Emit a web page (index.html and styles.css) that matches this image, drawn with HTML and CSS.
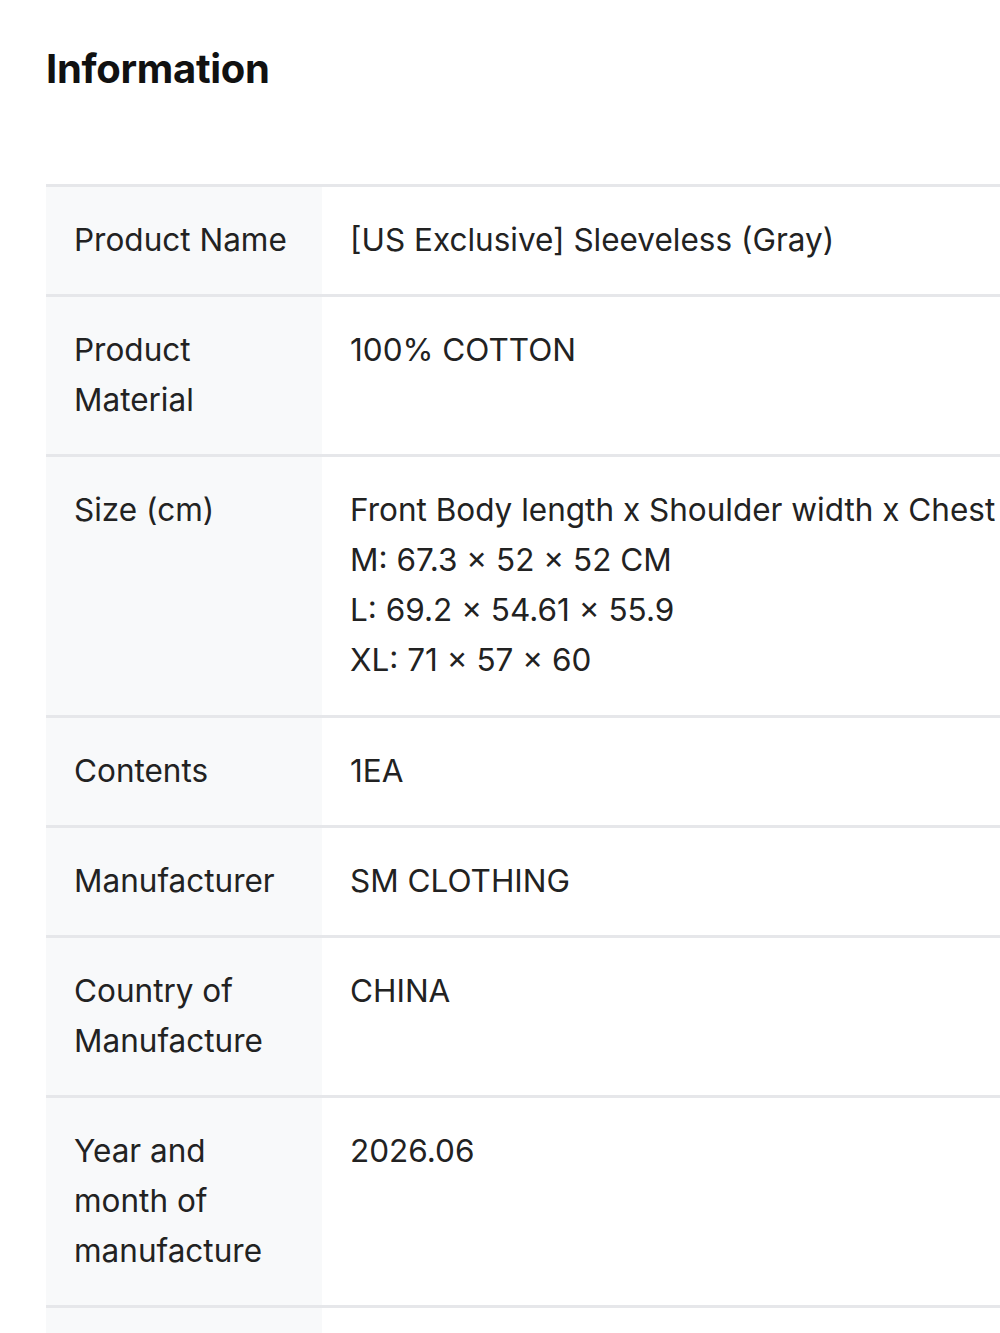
FILE: index.html
```html
<!DOCTYPE html>
<html lang="en">
<head>
<meta charset="utf-8">
<title>Information</title>
<link rel="stylesheet" href="styles.css">
</head>
<body>
<main class="page">
  <h1 class="title">Information</h1>
  <table class="info">
    <tbody>
      <tr><th>Product Name</th><td>[US Exclusive] Sleeveless (Gray)</td></tr>
      <tr><th>Product Material</th><td>100% COTTON</td></tr>
      <tr class="tall"><th>Size (cm)</th><td>Front Body length x Shoulder width x Chest width<br>M: 67.3 × 52 × 52 CM<br>L: 69.2 × 54.61 × 55.9<br>XL: 71 × 57 × 60</td></tr>
      <tr><th>Contents</th><td>1EA</td></tr>
      <tr><th>Manufacturer</th><td>SM CLOTHING</td></tr>
      <tr><th>Country of Manufacture</th><td>CHINA</td></tr>
      <tr><th>Year and month of manufacture</th><td>2026.06</td></tr>
      <tr><th>Quality Assurance Standard</th><td>Compliance with related laws and consumer dispute resolution standards</td></tr>
    </tbody>
  </table>
</main>
</body>
</html>
```

FILE: styles.css
```css
html, body {
  margin: 0;
  padding: 0;
  background: #ffffff;
  overflow: hidden;
}
.page {
  padding: 42px 0 0 46px;
  font-family: Inter, "Noto Sans", sans-serif;
  color: #222222;
}
.title {
  margin: 0 0 88px 0;
  font-size: 40px;
  line-height: 54px;
  font-weight: 700;
  color: #111111;
  letter-spacing: -0.3px;
}
.info {
  border-collapse: collapse;
  width: 1300px;
  table-layout: fixed;
}
.info tr {
  border-top: 3px solid #e6e7ea;
}
.info th, .info td {
  vertical-align: top;
  text-align: left;
  font-weight: 400;
  font-size: 31.5px;
  line-height: 50px;
  padding: 28px 28px 29px 28px;
}
.info .tall th, .info .tall td {
  padding-bottom: 30px;
}
.info th {
  width: 220px;
  background: #f8f9fa;
  color: #222222;
}
.info td {
  background: #ffffff;
  white-space: nowrap;
}
```
